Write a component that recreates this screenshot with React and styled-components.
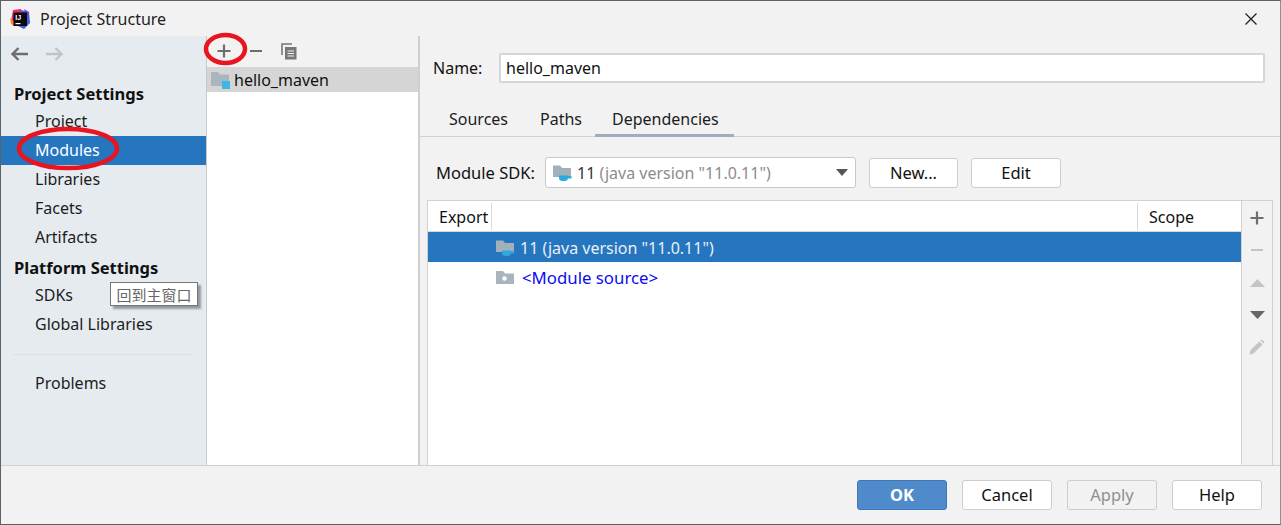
import React from 'react'
import styled, { createGlobalStyle } from 'styled-components'

const Global = createGlobalStyle`
  html, body {
    margin: 0;
    padding: 0;
    background: #f2f2f2;
  }
  * {
    box-sizing: border-box;
  }
`

const Win = styled.div`
  position: relative;
  width: 1281px;
  height: 525px;
  display: flex;
  flex-direction: column;
  overflow: hidden;
  border: 1px solid #59636a;
  border-right-color: #8b9195;
  background: #f2f2f2;
  color: #111;
  font-family: "Noto Sans", "Noto Sans CJK SC", sans-serif;
  font-size: 16px;
`

const TitleBar = styled.div`
  height: 35px;
  flex: none;
  display: flex;
  align-items: center;
  padding: 1px 22px 0 9px;
  background: #f2f2f2;
  font-size: 16px;
  color: #222;
`

const TitleText = styled.span`
  margin-left: 10px;
  flex: 1;
`

const Body = styled.div`
  flex: 1;
  min-height: 0;
  display: flex;
`

const Sidebar = styled.div`
  width: 206px;
  flex: none;
  background: #e6ebf0;
  border-right: 1px solid #c9c9c9;
  display: flex;
  flex-direction: column;
`

const NavBar = styled.div`
  height: 43px;
  flex: none;
  display: flex;
  align-items: center;
  gap: 16px;
  padding: 0 0 8px 10px;
`

const SideHead = styled.div`
  height: 28px;
  flex: none;
  display: flex;
  align-items: center;
  padding-left: 13px;
  margin-top: ${p => p.$top || 0}px;
  font-weight: 700;
  font-size: 16.5px;
  color: #111;
`

const SideItem = styled.div`
  height: 29px;
  flex: none;
  display: flex;
  align-items: center;
  padding: 0 0 2px 34px;
  background: ${p => (p.$active ? '#2675bf' : 'transparent')};
  color: ${p => (p.$active ? '#fff' : '#1c1c1c')};
`

const SideRule = styled.div`
  height: 1px;
  flex: none;
  margin: 15px 12px 14px 12px;
  background: #dde1e5;
`

const Middle = styled.div`
  width: 213px;
  flex: none;
  display: flex;
  flex-direction: column;
  background: #fff;
  border-right: 2px solid #cfcfcf;
`

const ListTools = styled.div`
  height: 31px;
  flex: none;
  display: flex;
  align-items: center;
  padding: 0 0 1px 10px;
  gap: 18px;
  background: #f2f2f2;
`

const ListRow = styled.div`
  height: 25px;
  flex: none;
  display: flex;
  align-items: center;
  gap: 4px;
  padding-left: 4px;
  background: #d5d5d5;
`

const Main = styled.div`
  flex: 1;
  min-width: 0;
  display: flex;
  flex-direction: column;
`

const NameRow = styled.div`
  height: 30px;
  flex: none;
  margin-top: 17px;
  display: flex;
  align-items: center;
  padding: 0 15px 0 13px;
`

const FieldLabel = styled.span`
  width: ${p => p.$w}px;
  flex: none;
  font-size: ${p => p.$size || 16}px;
`

const NameInput = styled.div`
  flex: 1;
  height: 30px;
  display: flex;
  align-items: center;
  padding-left: 5px;
  background: #fff;
  border: 2px solid #d6d6d6;
  border-radius: 2px;
`

const Tabs = styled.div`
  height: 37px;
  flex: none;
  margin-top: 17px;
  display: flex;
  padding-left: 13px;
  border-bottom: 1px solid #d1d1d1;
`

const Tab = styled.div`
  height: 37px;
  padding: 3px ${p => p.$r || 16}px 0 ${p => p.$l || 16}px;
  display: flex;
  align-items: center;
  border-bottom: 3px solid ${p => (p.$active ? '#9fadc0' : 'transparent')};
  color: #1c1c1c;
`

const SdkRow = styled.div`
  height: 31px;
  flex: none;
  margin-top: 20px;
  display: flex;
  align-items: center;
  padding-left: 16px;
`

const SdkSelect = styled.div`
  width: 311px;
  height: 31px;
  flex: none;
  display: flex;
  align-items: center;
  gap: 5px;
  padding: 0 7px 0 7px;
  background: #fff;
  border: 1px solid #c9c9c9;
  border-radius: 3px;
`

const SdkText = styled.span`
  flex: 1;
  color: #8c8c8c;
  white-space: nowrap;
`

const SdkName = styled.span`
  color: #333;
`

const Btn = styled.div`
  width: ${p => p.$w || 90}px;
  height: 30px;
  flex: none;
  display: flex;
  align-items: center;
  justify-content: center;
  margin-left: ${p => p.$left || 0}px;
  background: ${p => (p.$primary ? '#4f8acb' : p.$off ? '#f2f2f2' : '#fff')};
  border: 1px solid ${p => (p.$primary ? '#3f78b8' : '#cdcdcd')};
  border-radius: 3px;
  color: ${p => (p.$primary ? '#fff' : p.$off ? '#8f8f8f' : '#111')};
  font-weight: ${p => (p.$primary ? 700 : 400)};
  font-size: 16.5px;
  padding-bottom: 1px;
`

const TableWrap = styled.div`
  flex: 1;
  min-height: 0;
  margin: 12px 7px 0 7px;
  display: flex;
  border: 1px solid #d1d1d1;
  border-bottom: none;
`

const Table = styled.div`
  flex: 1;
  min-width: 0;
  display: flex;
  flex-direction: column;
  background: #fff;
`

const HeadRow = styled.div`
  height: 31px;
  flex: none;
  display: flex;
  align-items: stretch;
  border-bottom: 1px solid #d9d9d9;
`

const HeadCell = styled.div`
  display: flex;
  align-items: center;
  margin: 2px 0 1px 0;
  padding-left: ${p => p.$pad}px;
  width: ${p => p.$w || 'auto'};
  flex: ${p => (p.$grow ? 1 : 'none')};
  border-right: ${p => (p.$line ? '1px solid #d9d9d9' : 'none')};
`

const DepRow = styled.div`
  height: 30px;
  flex: none;
  display: flex;
  align-items: center;
  gap: ${p => (p.$active ? 5 : 8)}px;
  padding: ${p => (p.$active ? '1px' : '0')} 0 0 68px;
  background: ${p => (p.$active ? '#2675bf' : 'transparent')};
  color: ${p => (p.$active ? '#e8f0f8' : '#0b0bf0')};
  font-size: ${p => (p.$active ? 16 : 16.8)}px;
`

const SideTools = styled.div`
  width: 31px;
  flex: none;
  display: flex;
  flex-direction: column;
  padding-top: 1px;
  border-left: 1px solid #d1d1d1;
`

const ToolSlot = styled.div`
  height: 32.3px;
  flex: none;
  display: flex;
  align-items: center;
  justify-content: center;
`

const Footer = styled.div`
  height: 59px;
  flex: none;
  display: flex;
  align-items: center;
  justify-content: flex-end;
  gap: 15px;
  padding-right: 18px;
  border-top: 1px solid #d1d1d1;
`

const Tooltip = styled.div`
  position: absolute;
  left: 109px;
  top: 281px;
  width: 88px;
  height: 24px;
  display: flex;
  align-items: center;
  justify-content: center;
  background: #fff;
  border: 1px solid #767676;
  box-shadow: 3px 3px 2px rgba(0, 0, 0, 0.35);
  color: #666;
  font-size: 15px;
`

const RedMark = styled.svg`
  position: absolute;
  left: ${p => p.$x}px;
  top: ${p => p.$y}px;
  overflow: visible;
  pointer-events: none;
`

const Logo = () => (
  <svg width="20" height="20" viewBox="0 0 20 20">
    <path d="M3 1 L11 0 L13 6 L5 14 L1 12Z" fill="#f0266f" />
    <path d="M11 1 L19 3 L20 14 L14 20 L8 17Z" fill="#3f5fe0" />
    <path d="M0 9 L5 14 L4 17 L1 15Z" fill="#ff8a1f" />
    <path d="M14 0 L19 3 L17 8Z" fill="#7a3fe0" />
    <rect x="3.5" y="3.5" width="13.5" height="13.5" fill="#0b0b0b" />
    <rect x="5.5" y="14" width="5" height="1.2" fill="#fff" />
    <text x="5.3" y="11" fill="#fff" fontSize="7" fontWeight="700" fontFamily="Liberation Sans">IJ</text>
  </svg>
)

const Close = () => (
  <svg width="14" height="14" viewBox="0 0 14 14">
    <path d="M1.5 1.5 L12.5 12.5 M12.5 1.5 L1.5 12.5" stroke="#222" strokeWidth="1.3" fill="none" />
  </svg>
)

const Arrow = ({ color, flip }) => (
  <svg width="18" height="14" viewBox="0 0 18 14" style={flip ? { transform: 'scaleX(-1)' } : undefined}>
    <path d="M1.5 7 H17 M7.5 1 L1.5 7 L7.5 13" stroke={color} strokeWidth="2.4" fill="none" />
  </svg>
)

const Plus = ({ color = '#6e6e6e' }) => (
  <svg width="14" height="14" viewBox="0 0 14 14">
    <path d="M7 0.5 V13.5 M0.5 7 H13.5" stroke={color} strokeWidth="2.2" fill="none" />
  </svg>
)

const Minus = ({ color = '#6e6e6e' }) => (
  <svg width="14" height="14" viewBox="0 0 14 14">
    <path d="M1 7 H13" stroke={color} strokeWidth="2" fill="none" />
  </svg>
)

const Copy = () => (
  <svg width="16" height="17" viewBox="0 0 16 17">
    <path d="M1 12 V1 H11" stroke="#777" strokeWidth="1.6" fill="none" />
    <rect x="4" y="4" width="11.5" height="12.5" fill="#777" />
    <path d="M6.5 8 H13 M6.5 10.5 H13 M6.5 13 H13" stroke="#f2f2f2" strokeWidth="1.1" />
  </svg>
)

const Triangle = ({ color, down }) => (
  <svg width="15" height="8" viewBox="0 0 15 8">
    <path d={down ? 'M0 0 H15 L7.5 8Z' : 'M0 8 H15 L7.5 0Z'} fill={color} />
  </svg>
)

const Pencil = () => (
  <svg width="16" height="16" viewBox="0 0 16 16">
    <path d="M0.5 15.5 L1.5 11 L10.5 2.5 L13.5 5.5 L4.5 14.5Z M11.5 1.5 L13 0.5 L15.5 3 L14.5 4.5Z" fill="#c4c4c4" />
  </svg>
)

const ModuleFolder = () => (
  <svg width="19" height="18" viewBox="0 0 19 18">
    <path d="M0 1 H7 L9 3.5 H18 V15 H0Z" fill="#a9b6c0" />
    <rect x="11" y="10" width="8" height="8" fill="#40b6e0" />
  </svg>
)

const JdkFolder = () => (
  <svg width="19" height="16" viewBox="0 0 19 16">
    <path d="M0 0.5 H7 L9 3 H18 V12 H0Z" fill="#a2b0bc" />
    <path d="M6 10.5 H15 V13 Q15 16 11.5 16 H9.5 Q6 16 6 13Z" fill="#2fa8dc" />
    <path d="M15 11 H18.5 V13.5 H15Z" fill="#2fa8dc" />
  </svg>
)

const SourceFolder = () => (
  <svg width="18" height="15" viewBox="0 0 18 15">
    <path d="M0 1 H7 L9 3.5 H18 V14 H0Z" fill="#aab4bc" />
    <circle cx="8.5" cy="8.5" r="2.2" fill="#fff" />
  </svg>
)

const Chevron = () => (
  <svg width="12" height="7" viewBox="0 0 12 7">
    <path d="M0 0 H12 L6 7Z" fill="#555" />
  </svg>
)

const App = () => (
  <Win>
    <Global />
    <TitleBar>
      <Logo />
      <TitleText>Project Structure</TitleText>
      <Close />
    </TitleBar>
    <Body>
      <Sidebar>
        <NavBar>
          <Arrow color="#6e6e6e" />
          <Arrow color="#c4c4c4" flip />
        </NavBar>
        <SideHead>Project Settings</SideHead>
        <SideItem>Project</SideItem>
        <SideItem $active>Modules</SideItem>
        <SideItem>Libraries</SideItem>
        <SideItem>Facets</SideItem>
        <SideItem>Artifacts</SideItem>
        <SideHead $top={1}>Platform Settings</SideHead>
        <SideItem>SDKs</SideItem>
        <SideItem>Global Libraries</SideItem>
        <SideRule />
        <SideItem>Problems</SideItem>
      </Sidebar>
      <Middle>
        <ListTools>
          <Plus />
          <Minus />
          <Copy />
        </ListTools>
        <ListRow>
          <ModuleFolder />
          hello_maven
        </ListRow>
      </Middle>
      <Main>
        <NameRow>
          <FieldLabel $w={66}>Name:</FieldLabel>
          <NameInput>hello_maven</NameInput>
        </NameRow>
        <Tabs>
          <Tab>Sources</Tab>
          <Tab $r={13}>Paths</Tab>
          <Tab $active $l={17} $r={15}>Dependencies</Tab>
        </Tabs>
        <SdkRow>
          <FieldLabel $w={109} $size={16.5}>Module SDK:</FieldLabel>
          <SdkSelect>
            <JdkFolder />
            <SdkText>
              <SdkName>11</SdkName> (java version "11.0.11")
            </SdkText>
            <Chevron />
          </SdkSelect>
          <Btn $left={13} $w={89}>New...</Btn>
          <Btn $left={13}>Edit</Btn>
        </SdkRow>
        <TableWrap>
          <Table>
            <HeadRow>
              <HeadCell $pad={11} $w="64px" $line>Export</HeadCell>
              <HeadCell $pad={0} $grow $line />
              <HeadCell $pad={11} $w="103px">Scope</HeadCell>
            </HeadRow>
            <DepRow $active>
              <JdkFolder />
              11 (java version "11.0.11")
            </DepRow>
            <DepRow>
              <SourceFolder />
              &lt;Module source&gt;
            </DepRow>
          </Table>
          <SideTools>
            <ToolSlot><Plus /></ToolSlot>
            <ToolSlot><Minus color="#c4c4c4" /></ToolSlot>
            <ToolSlot><Triangle color="#c4c4c4" /></ToolSlot>
            <ToolSlot><Triangle color="#666" down /></ToolSlot>
            <ToolSlot><Pencil /></ToolSlot>
          </SideTools>
        </TableWrap>
      </Main>
    </Body>
    <Footer>
      <Btn $primary>OK</Btn>
      <Btn>Cancel</Btn>
      <Btn $off>Apply</Btn>
      <Btn>Help</Btn>
    </Footer>
    <Tooltip>回到主窗口</Tooltip>
    <RedMark $x={16} $y={126} width="102" height="43" viewBox="0 0 102 43">
      <ellipse cx="51" cy="21.5" rx="49" ry="19.5" fill="none" stroke="#e8141f" strokeWidth="4.5" />
    </RedMark>
    <RedMark $x={203} $y={32} width="43" height="32" viewBox="0 0 43 32">
      <ellipse cx="21.5" cy="16" rx="19.5" ry="14" fill="none" stroke="#e8141f" strokeWidth="4.5" />
    </RedMark>
  </Win>
)

export default App
